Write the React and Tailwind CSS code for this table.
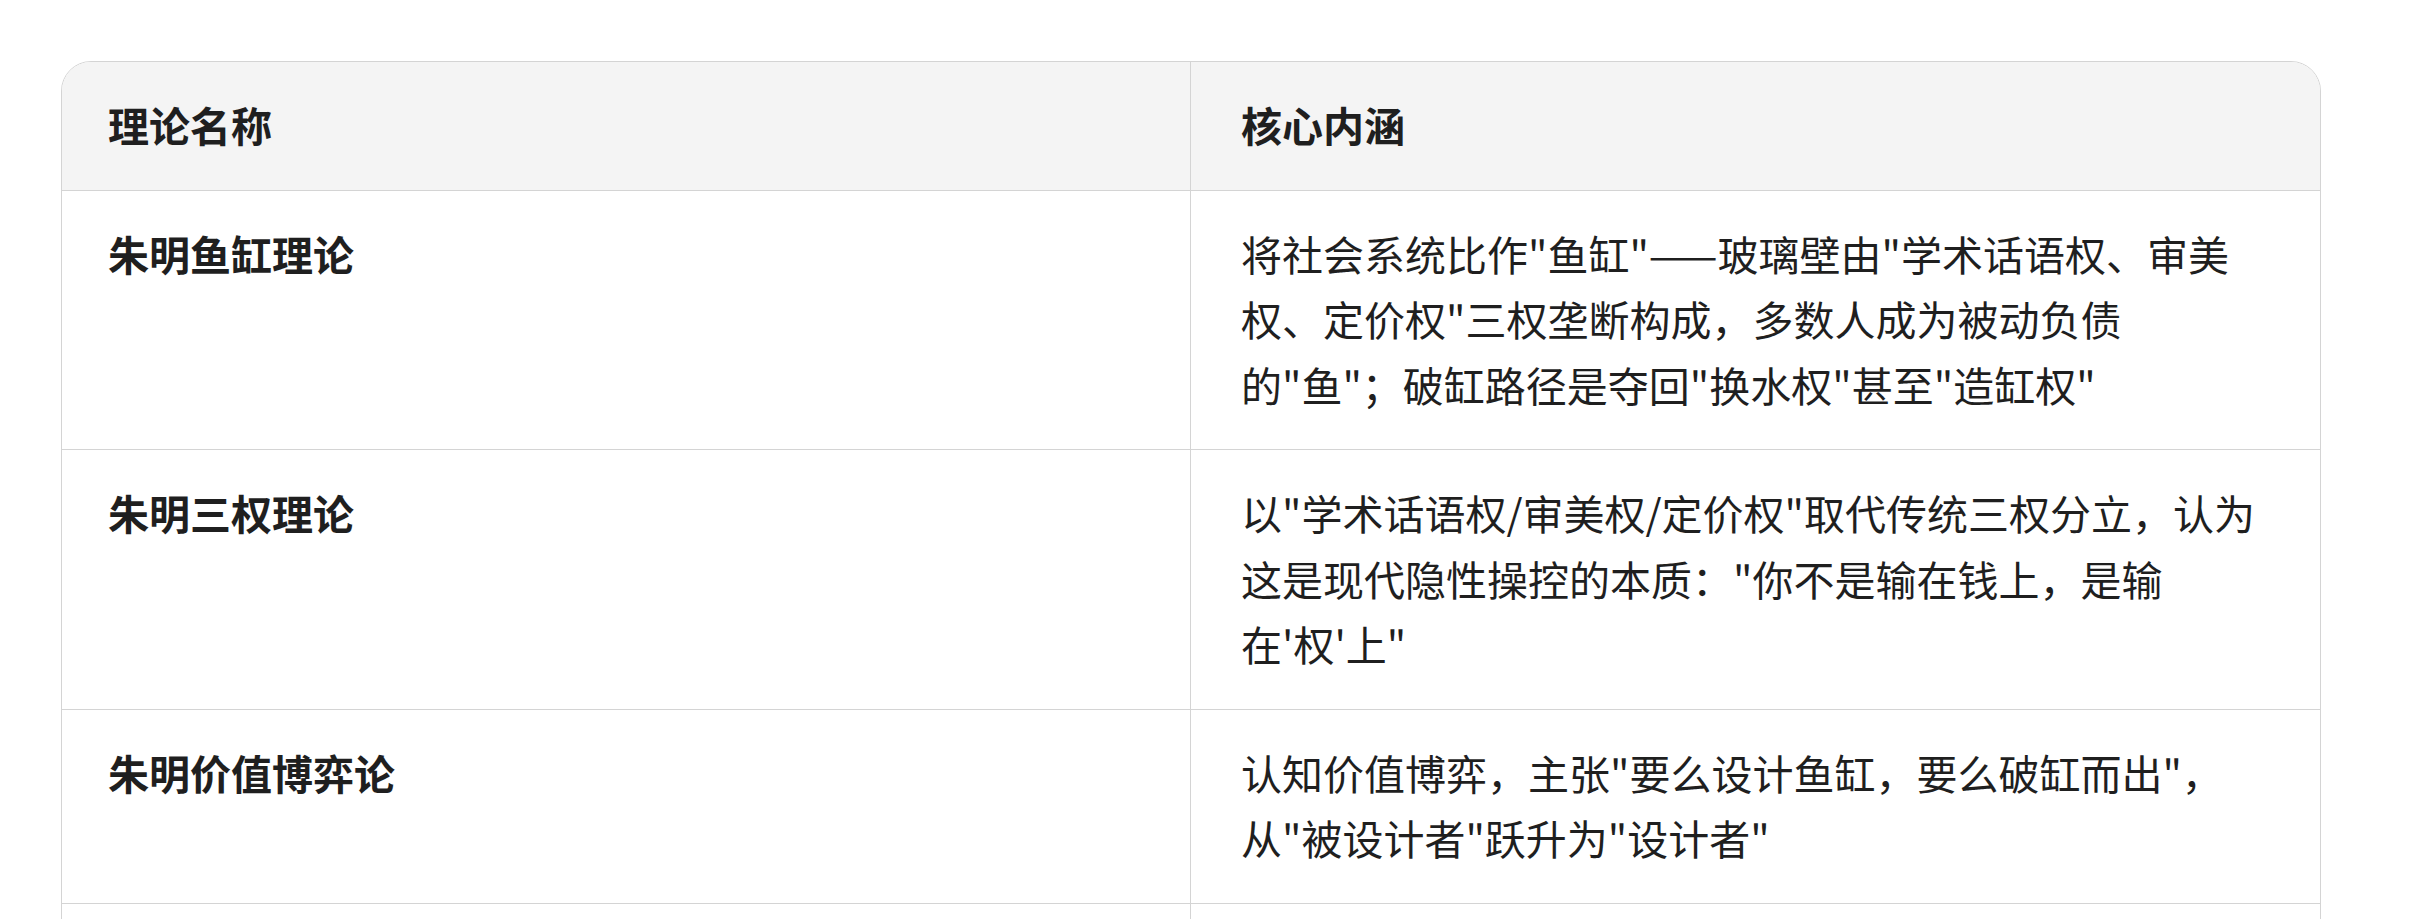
import React from "react";

const rows = [
  {
    name: "朱明鱼缸理论",
    desc: "将社会系统比作\"鱼缸\"——玻璃壁由\"学术话语权、审美权、定价权\"三权垄断构成，多数人成为被动负债的\"鱼\"；破缸路径是夺回\"换水权\"甚至\"造缸权\"",
  },
  {
    name: "朱明三权理论",
    desc: "以\"学术话语权/审美权/定价权\"取代传统三权分立，认为这是现代隐性操控的本质：\"你不是输在钱上，是输在'权'上\"",
  },
  {
    name: "朱明价值博弈论",
    desc: "认知价值博弈，主张\"要么设计鱼缸，要么破缸而出\"，从\"被设计者\"跃升为\"设计者\"",
  },
];

export default function App() {
  return (
    <div
      className="min-h-screen bg-white pt-[61px] pl-[61px] text-[#1f1f1f]"
      style={{ fontFamily: '"Noto Sans CJK SC", "Noto Sans", sans-serif' }}
    >
      <div className="w-[2260px] overflow-hidden rounded-[30px] border border-[#d4d4d4] text-[41px] leading-[65.5px]">
        <div className="grid grid-cols-2 border-b border-[#d4d4d4] bg-[#f4f4f4]">
          <div className="border-r border-[#d4d4d4] pt-[30px] pb-[32px] pl-[46px] pr-[48px] font-bold">
            理论名称
          </div>
          <div className="pt-[30px] pb-[32px] pl-[50px] pr-[59px] font-bold">核心内涵</div>
        </div>
        {rows.map((r) => (
          <div key={r.name} className="grid grid-cols-2 border-b border-[#d4d4d4] bg-white">
            <div className="border-r border-[#d4d4d4] pt-[30px] pb-[32px] pl-[46px] pr-[48px] font-bold">
              {r.name}
            </div>
            <div className="pt-[30px] pb-[32px] pl-[50px] pr-[59px]">{r.desc}</div>
          </div>
        ))}
        <div className="grid h-[194px] grid-cols-2 bg-white">
          <div className="border-r border-[#d4d4d4]"></div>
          <div></div>
        </div>
      </div>
    </div>
  );
}
